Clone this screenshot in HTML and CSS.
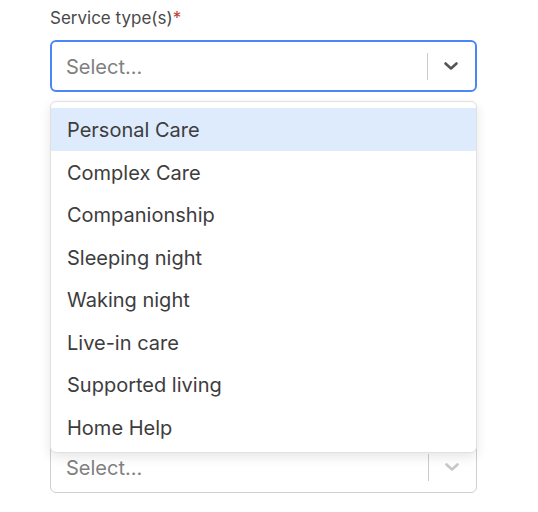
FILE: index.html
```html
<!DOCTYPE html>
<html>
<head>
<meta charset="utf-8">
<link rel="stylesheet" href="styles.css">
</head>
<body>
<div class="form">
  <div class="field">
    <div class="label">Service type(s)<span class="req">*</span></div>
    <div class="select focused">
      <span class="placeholder">Select...</span>
      <span class="indicators">
        <span class="sep"></span>
        <svg class="chev" width="20" height="20" viewBox="0 0 20 20"><path d="M4.5 7.5 L10 12.5 L15.5 7.5" fill="none" stroke="#555" stroke-width="2.6" stroke-linecap="round" stroke-linejoin="round"/></svg>
      </span>
    </div>
    <div class="menu">
      <div class="option active">Personal Care</div>
      <div class="option">Complex Care</div>
      <div class="option">Companionship</div>
      <div class="option">Sleeping night</div>
      <div class="option">Waking night</div>
      <div class="option">Live-in care</div>
      <div class="option">Supported living</div>
      <div class="option">Home Help</div>
    </div>
  </div>
  <div class="field second">
    <div class="select">
      <span class="placeholder">Select...</span>
      <span class="indicators">
        <span class="sep light"></span>
        <svg class="chev" width="20" height="20" viewBox="0 0 20 20"><path d="M4.5 7.5 L10 12.5 L15.5 7.5" fill="none" stroke="#c8c8c8" stroke-width="2.6" stroke-linecap="round" stroke-linejoin="round"/></svg>
      </span>
    </div>
  </div>
</div>
</body>
</html>
```
FILE: styles.css
```css
html, body {
  margin: 0;
  padding: 0;
  background: #ffffff;
}
body {
  font-family: "Inter", "Liberation Sans", sans-serif;
  color: #3d3d3d;
}
.form {
  padding: 8px 0 0 50px;
  width: 427px;
}
.field {
  position: relative;
}
.label {
  font-size: 17px;
  line-height: 20px;
  color: #4a4a4a;
  height: 20px;
}
.req {
  color: #c0392b;
}
.select {
  box-sizing: border-box;
  margin-top: 12px;
  height: 52px;
  border: 1px solid #cfcfcf;
  border-radius: 6px;
  display: flex;
  align-items: center;
  padding-left: 15px;
  background: #fff;
}
.select.focused {
  border: 2px solid #4a86f7;
  padding-left: 14px;
}
.placeholder {
  flex: 1;
  font-size: 20px;
  color: #808080;
  padding-top: 2px;
}
.indicators {
  display: flex;
  align-items: center;
  height: 100%;
}
.sep {
  width: 1px;
  height: 27px;
  background: #cccccc;
}
.chev {
  margin: 0 14px 0 13px;
}
.menu {
  position: absolute;
  top: 93px;
  left: 0;
  right: 0;
  z-index: 2;
  background: #fff;
  border: 1px solid #e0e0e0;
  border-radius: 6px;
  padding: 6px 0 4px;
  box-shadow: 0 4px 12px rgba(0,0,0,0.10);
}
.option {
  box-sizing: border-box;
  height: 42.5px;
  line-height: 42.5px;
  padding-left: 16px;
  padding-top: 1px;
  font-size: 20px;
  color: #3d3d3d;
}
.option.active {
  background: #deebfc;
}
.second {
  margin-top: 349px;
}
.second .select {
  margin-top: 0;
}
```
